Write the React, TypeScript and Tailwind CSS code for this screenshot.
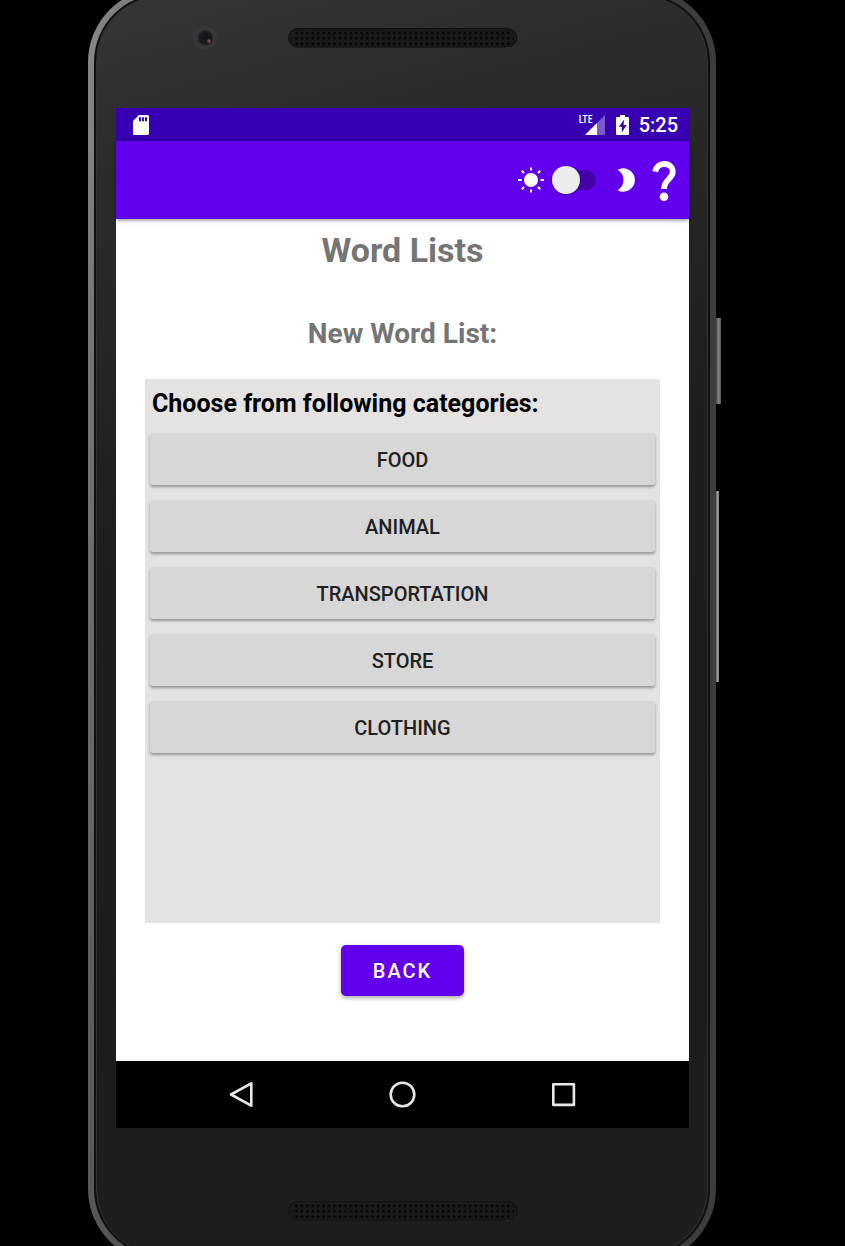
import { useState } from "react";

const categories = ["Food", "Animal", "Transportation", "Store", "Clothing"];

function SpeakerGrille({ id }: { id: string }) {
  return (
    <svg viewBox="0 0 230 20" className="h-5 w-full" aria-hidden="true">
      <defs>
        <pattern id={id} width="5.43" height="5.4" patternUnits="userSpaceOnUse" x="0.4" y="2.2">
          <circle cx="2.7" cy="2.7" r="1.4" fill="#020202" />
        </pattern>
      </defs>
      <path d="M218 19.5 A9.6 9.6 0 0 0 221 1" fill="none" stroke="#6b6b6b" strokeWidth="1" />
      <rect x="0.5" y="0.5" width="228.5" height="18.6" rx="9.3" fill="#1a1a1a" stroke="#111111" />
      <rect x="4" y="2.2" width="222" height="16.2" rx="7" fill={`url(#${id})`} />
    </svg>
  );
}

function Camera() {
  return (
    <svg viewBox="0 0 26 26" className="h-[26px] w-[26px]" aria-hidden="true">
      <circle cx="13" cy="13" r="12" fill="#383636" />
      <circle cx="13" cy="13" r="8.5" fill="#302e2f" />
      <circle cx="13.5" cy="13" r="7" fill="#1c1a1f" />
      <circle cx="14" cy="12" r="4" fill="#15151c" />
      <circle cx="17" cy="16" r="2" fill="#5a3f48" />
      <circle cx="17.2" cy="15.8" r="0.7" fill="#94707a" />
    </svg>
  );
}

function StatusBar() {
  return (
    <div className="flex h-[33px] items-center bg-[#3700b3] pl-[17px] pr-[11px] text-white">
      <svg viewBox="0 0 16 20" className="h-5 w-4" aria-hidden="true">
        <path
          fill="currentColor"
          fillRule="evenodd"
          d="M6 0h8.5a1.5 1.5 0 0 1 1.5 1.5v17a1.5 1.5 0 0 1-1.5 1.5h-13A1.5 1.5 0 0 1 0 18.500V6zM6 2.200v4h2v-4zM9 2.200v4h2v-4zM12 2.200v4h2v-4z"
        />
      </svg>
      <div className="ml-auto flex items-center">
        <div className="flex h-5">
          <span className="font-['Roboto_Condensed','Roboto',sans-serif] text-[10px] font-medium leading-[10px]">
            LTE
          </span>
          <svg viewBox="0 0 20 20" className="-ml-2 h-5 w-5" aria-hidden="true">
            <path d="M20 0V20H0z" fill="#ffffff" fillOpacity="0.35" />
            <path d="M12 8V20H0z" fill="#ffffff" />
          </svg>
        </div>
        <svg viewBox="0 0 13 20" className="ml-[11px] h-5 w-[13px]" aria-hidden="true">
          <path
            fill="currentColor"
            fillRule="evenodd"
            d="M4 0h5v2h2.800a1.200 1.200 0 0 1 1.200 1.200v15.600a1.200 1.200 0 0 1-1.200 1.200H1.200A1.200 1.200 0 0 1 0 18.800V3.200A1.200 1.200 0 0 1 1.200 2H4zM8.300 4.500L2.800 11.800h3v5.700l4.800-7.600H7.500z"
          />
        </svg>
        <span className="ml-[10px] text-xl font-medium leading-6">5:25</span>
      </div>
    </div>
  );
}

function Toolbar() {
  const [dark, setDark] = useState(false);
  return (
    <header className="relative flex h-[78px] items-center justify-end bg-[#6200ee] pr-[13px] text-white shadow-[0_1px_4px_rgba(0,0,0,0.5)]">
      <label className="flex items-center" aria-label="Dark theme">
        <svg viewBox="0 0 26 26" className="h-[26px] w-[26px]" aria-hidden="true">
          <circle cx="13" cy="13" r="7" fill="currentColor" />
          <g stroke="currentColor" strokeWidth="2">
            <path d="M13 0.500V3.500M13 22.500V25.500M0 13H3.500M22.500 13H26" />
            <path d="M3.800 3.800L6 6M20 20L22.200 22.200M3.800 22.200L6 20M20 6L22.200 3.800" />
          </g>
        </svg>
        <input
          type="checkbox"
          role="switch"
          checked={dark}
          onChange={(event) => setDark(event.target.checked)}
          className="relative ml-2 h-7 w-11 appearance-none before:absolute before:left-1 before:top-1 before:h-5 before:w-10 before:rounded-full before:bg-[#4400a6] after:absolute after:left-0 after:top-0 after:h-7 after:w-7 after:rounded-full after:bg-[#ececec] after:shadow-[0_1px_2px_rgba(0,0,0,0.4)] checked:after:left-4"
        />
        <svg viewBox="0 0 20 26" className="ml-5 h-[26px] w-5" aria-hidden="true">
          <path d="M1.500 2.800A11.700 11.700 0 1 1 1.500 23.200A11.700 11.700 0 0 0 1.500 2.800z" fill="currentColor" />
        </svg>
      </label>
      <button type="button" aria-label="Help" className="ml-4">
        <svg viewBox="0 0 24 42" className="h-[42px] w-6" aria-hidden="true">
          <path
            d="M3.200 12.600C4.300 7.500 8 5 12.300 5C17.500 5 20.800 8.400 20.800 12.700C20.800 20 12 20.300 12 30"
            fill="none"
            stroke="currentColor"
            strokeWidth="5.800"
          />
          <circle cx="12" cy="37.700" r="4.300" fill="currentColor" />
        </svg>
      </button>
    </header>
  );
}

function NavigationBar() {
  return (
    <nav className="flex h-[67px] items-center justify-center gap-[133px] bg-black text-[#e8e8e8]">
      <button type="button" aria-label="Back">
        <svg viewBox="0 0 28 28" className="h-7 w-7" fill="none" stroke="currentColor" strokeWidth="2.600" strokeLinejoin="round">
          <path d="M23.300 2.300V24.700L3 13.500z" />
        </svg>
      </button>
      <button type="button" aria-label="Home">
        <svg viewBox="0 0 28 28" className="h-7 w-7" fill="none" stroke="currentColor" strokeWidth="2.600">
          <circle cx="13.500" cy="13.500" r="11.800" />
        </svg>
      </button>
      <button type="button" aria-label="Recent apps">
        <svg viewBox="0 0 28 28" className="h-7 w-7" fill="none" stroke="currentColor" strokeWidth="2.600" strokeLinejoin="round">
          <rect x="3.300" y="3.300" width="20.600" height="20.600" />
        </svg>
      </button>
    </nav>
  );
}

function WordLists() {
  return (
    <main className="flex grow flex-col bg-white px-[29px] pb-[65px] pt-[11px]">
      <h1 className="text-center text-[34px] font-bold leading-10 text-[#757575]">Word Lists</h1>
      <h2 className="mt-[46px] text-center text-[28px] font-bold leading-9 text-[#757575]">New Word List:</h2>
      <section className="mt-[27px] flex grow flex-col bg-[#e4e3e1] px-[5px] pb-4 pt-[10px]">
        <h3 className="pl-[2px] text-[25px] font-bold leading-[30px] text-black">
          Choose from following categories:
        </h3>
        <div className="mt-[14px] flex flex-col gap-[15px]">
          {categories.map((category) => (
            <button
              key={category}
              type="button"
              className="h-[52px] rounded-[3px] bg-[#d7d7d7] pt-[2px] text-xl font-medium uppercase text-[#202020] shadow-[0_2px_3px_rgba(0,0,0,0.35)]"
            >
              {category}
            </button>
          ))}
        </div>
      </section>
      <button
        type="button"
        className="mt-[22px] h-[51px] self-center rounded-[5px] bg-[#6200ee] px-8 text-xl font-medium uppercase tracking-widest text-white shadow-[0_2px_4px_rgba(0,0,0,0.35)]"
      >
        Back
      </button>
    </main>
  );
}

export default function App() {
  return (
    <div className="flex min-h-screen overflow-hidden bg-black pl-[88px] pr-[129px] font-['Roboto',sans-serif]">
      <div className="relative -mb-[17px] -mt-3 flex grow rounded-[74px] bg-[linear-gradient(100deg,#8a8a8a_0%,#747474_8%,#606060_20%,#3d3b3c_45%,#3d3b3c_100%)] p-[6px]">
        <div className="absolute -right-[5px] top-[330px] h-[86px] w-[5px] bg-[linear-gradient(90deg,#444444,#858585_50%,#555555)]" />
        <div className="absolute -right-[3px] top-[503px] h-[191px] w-[3px] bg-[linear-gradient(90deg,#555555,#a0a0a0_50%,#777777)]" />
        <div className="flex grow rounded-[68px] bg-[#101010] p-[2px]">
          <div className="flex grow flex-col rounded-[66px] border border-[#333333] bg-[linear-gradient(165deg,#363637_0%,#2c2c2c_12%,#1e1e1e_40%,#1c1c1c_70%,#1e1e1e_100%)] pl-[19px] pr-[18px]">
            <div className="grid h-[111px] grid-cols-[1fr_230px_1fr] items-start pt-[31px]">
              <div className="-mt-[3px] flex justify-center pl-[6px]">
                <Camera />
              </div>
              <SpeakerGrille id="earpiece" />
            </div>
            <div className="flex grow flex-col">
              <StatusBar />
              <Toolbar />
              <WordLists />
              <NavigationBar />
            </div>
            <div className="flex h-[126px] justify-center pt-[73px]">
              <div className="w-[230px]">
                <SpeakerGrille id="loudspeaker" />
              </div>
            </div>
          </div>
        </div>
      </div>
    </div>
  );
}
